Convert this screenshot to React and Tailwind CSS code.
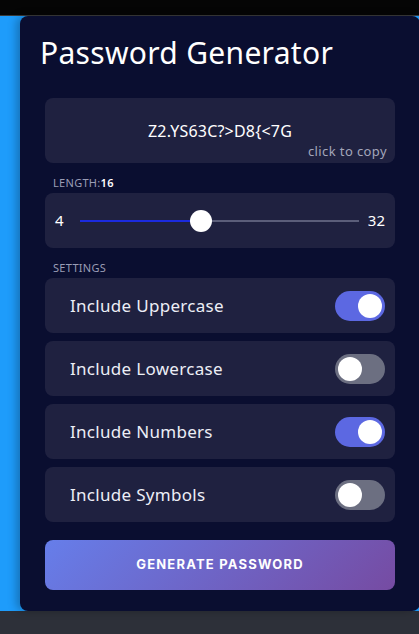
import React, { useState } from "react";

const mont = { fontFamily: '"Noto Sans", "DejaVu Sans", sans-serif' };

const Toggle = ({ on, onClick }) => (
  <button
    onClick={onClick}
    className={`relative w-[50px] h-[30px] rounded-full transition-colors ${
      on ? "bg-[#5c68e2]" : "bg-[#6c6f81]"
    }`}
  >
    <span
      className={`absolute top-[3px] w-[24px] h-[24px] rounded-full bg-white transition-all ${
        on ? "left-[23px]" : "left-[3px]"
      }`}
    />
  </button>
);

const App = () => {
  const [length] = useState(16);
  const [settings, setSettings] = useState({
    upper: true,
    lower: false,
    numbers: true,
    symbols: false,
  });

  const rows = [
    { key: "upper", label: "Include Uppercase" },
    { key: "lower", label: "Include Lowercase" },
    { key: "numbers", label: "Include Numbers" },
    { key: "symbols", label: "Include Symbols" },
  ];

  const pct = (length - 4) / 28;

  return (
    <div className="w-[419px] h-[634px] flex flex-col overflow-hidden bg-[#2d3039]" style={mont}>
      {/* top bar */}
      <div className="h-[16px] bg-[#050505] border-b border-[#3a3a3a] shrink-0" />

      <div className="bg-[#1e9cfb] shrink-0">
        <div className="ml-[20px] w-[400px] h-[595px] rounded-lg bg-[#0a0e30] shadow-[-4px_0_8px_rgba(0,0,0,0.25)] pt-[19px]">
          <h1 className="pl-[20px] text-[30px] leading-[36px] text-white font-normal tracking-[0.3px]">
            Password Generator
          </h1>

          <div className="px-[25px] mt-[27px]">
            {/* result */}
            <div className="relative h-[65px] rounded-lg bg-[#1f2140] flex items-center justify-center">
              <span className="text-[16px] text-white tracking-[0.2px]">Z2.YS63C?&gt;D8{"{"}&lt;7G</span>
              <span className="absolute right-[8px] bottom-[2px] text-[13px] text-[#a3a6ba] tracking-[0.4px]">
                click to copy
              </span>
            </div>

            {/* length */}
            <div className="mt-[13px] pl-[8px] text-[11px] leading-[14px] text-[#9a9db5] tracking-[0.3px]">
              LENGTH:<span className="text-white font-semibold">{length}</span>
            </div>
            <div className="mt-[3px] h-[55px] rounded-lg bg-[#1f2140] flex items-center px-[10px]">
              <span className="text-[15px] text-white w-[10px]">4</span>
              <div className="relative flex-1 h-[22px] ml-[15px] mr-[9px]">
                <div className="absolute left-0 right-0 top-[10px] h-[2px] bg-[#5b5e7a]" />
                <div
                  className="absolute left-0 top-[10px] h-[2px] bg-[#1b2ae0]"
                  style={{ width: `calc(11px + ${pct} * (100% - 22px))` }}
                />
                <div
                  className="absolute top-0 w-[22px] h-[22px] rounded-full bg-white"
                  style={{ left: `calc(${pct} * (100% - 22px))` }}
                />
              </div>
              <span className="text-[15px] text-white">32</span>
            </div>

            {/* settings */}
            <div className="mt-[13px] pl-[8px] text-[11px] leading-[14px] text-[#9a9db5] tracking-[0.3px]">
              SETTINGS
            </div>
            <div className="mt-[3px] flex flex-col gap-[8px]">
              {rows.map((r) => (
                <div
                  key={r.key}
                  className="h-[55px] rounded-lg bg-[#1f2140] flex items-center justify-between pl-[25px] pr-[10px]"
                >
                  <span className="text-[17px] text-[#eceef6] tracking-[0.3px]">{r.label}</span>
                  <Toggle
                    on={settings[r.key]}
                    onClick={() => setSettings({ ...settings, [r.key]: !settings[r.key] })}
                  />
                </div>
              ))}
            </div>

            <button
              className="mt-[18px] w-full h-[50px] rounded-lg bg-[linear-gradient(135deg,#667eea_0%,#764ba2_100%)] text-white text-[13px] font-bold tracking-[1.2px]"
              style={{ fontFamily: '"Inter", "Liberation Sans", sans-serif' }}
            >
              GENERATE PASSWORD
            </button>
          </div>
        </div>
      </div>
    </div>
  );
};

export default App;
